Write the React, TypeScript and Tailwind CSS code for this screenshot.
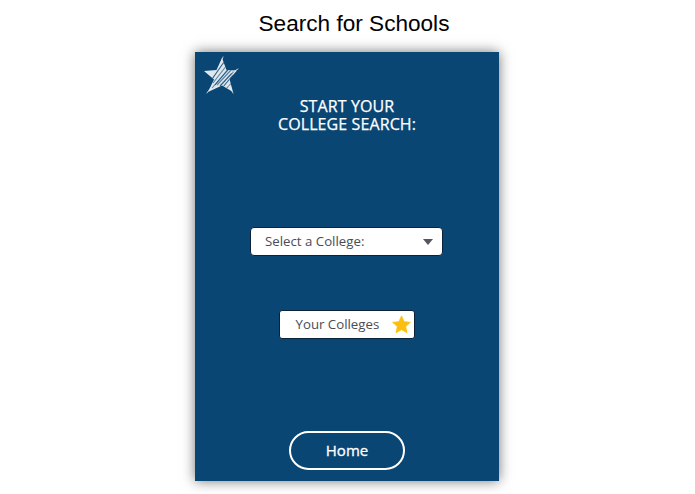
const STAR_PATH = "M20 2 L24.5 14 L35 14.5 L27.5 23 L31 36 L20 29.5 L6 36 L12 23.5 L2 15 L14.5 14 Z";

const HATCH_LINES = [
  "M8 26 L22 6", "M11 27 L25 9", "M13 29 L28 11", "M15 29 L30 13",
  "M18 30 L32 15", "M10 32 L26 14", "M21 31 L31 19", "M24 33 L32 24",
];

function SketchStar() {
  return (
    <svg width="37" height="38" viewBox="0 0 37 38" fill="none" className="block">
      <defs>
        <clipPath id="star-clip">
          <path d={STAR_PATH} />
        </clipPath>
      </defs>
      <path d={STAR_PATH} fill="#dfe7ee" />
      <g clipPath="url(#star-clip)">
        {HATCH_LINES.map((d, i) => (
          <path key={i} d={d} stroke="#20557f" strokeWidth="1.1" opacity={i % 2 === 0 ? 0.95 : 0.7} />
        ))}
      </g>
      {/* loose scribble ends past the outline */}
      <path d="M21 1 L18 9 M36 13 L29 17 M31 37 L27 30 M5 37 L10 30" stroke="#e8eef3" strokeWidth="0.8" strokeLinecap="round" />
    </svg>
  );
}

function GoldStar() {
  return (
    <svg width="19" height="19" viewBox="0 0 24 24" className="block">
      <path
        d="M12 1.2 L15.3 8.4 L23.2 9.3 L17.3 14.6 L18.9 22.4 L12 18.5 L5.1 22.4 L6.7 14.6 L0.8 9.3 L8.7 8.4 Z"
        fill="#fdbf0f"
        stroke="#fdbf0f"
        strokeWidth="1"
        strokeLinejoin="round"
      />
    </svg>
  );
}

export default function App() {
  return (
    <div className="w-[695px] h-[494px] overflow-hidden bg-white font-['Open_Sans',sans-serif]">
      <h1 className="pt-[10px] pl-[13px] text-center font-['Liberation_Sans',sans-serif] text-[22.6px] leading-[28px] font-normal text-black">
        Search for Schools
      </h1>

      <div className="relative ml-[195px] mt-[14px] flex h-[429px] w-[304px] flex-col items-center bg-[#0a4673] shadow-[0_0_12px_rgba(0,0,0,0.55)]">
        {/* logo sits over the corner */}
        <div className="absolute left-[7px] top-[4px]">
          <SketchStar />
        </div>

        <div className="mt-[45px] text-center text-[16px] leading-[18px] tracking-[0.1px] text-white [-webkit-text-stroke:0.25px_white]">
          START YOUR
          <br />
          COLLEGE SEARCH:
        </div>

        <div className="mt-[94px] mr-[1px] flex h-[29px] w-[193px] items-center justify-between rounded-[4px] border border-[#0b2238] bg-white pl-[14px] pr-[9px]">
          <span className="text-[13.25px] text-[#4a4c55]">Select a College:</span>
          <svg width="10" height="6" viewBox="0 0 10 6" className="block">
            <path d="M0 0 H10 L5 6 Z" fill="#55575f" />
          </svg>
        </div>

        <div className="mt-[54px] mr-[1px] flex h-[29px] w-[136px] items-center justify-between rounded-[3px] border border-[#0b2238] bg-white pl-[16px] pr-[3px]">
          <span className="text-[13.25px] text-[#4a4c55]">Your Colleges</span>
          <GoldStar />
        </div>

        <div className="mt-[92px] flex h-[39px] w-[116px] items-center justify-center rounded-full border-2 border-white text-[15px] text-white [-webkit-text-stroke:0.3px_white]">
          Home
        </div>
      </div>
    </div>
  );
}
